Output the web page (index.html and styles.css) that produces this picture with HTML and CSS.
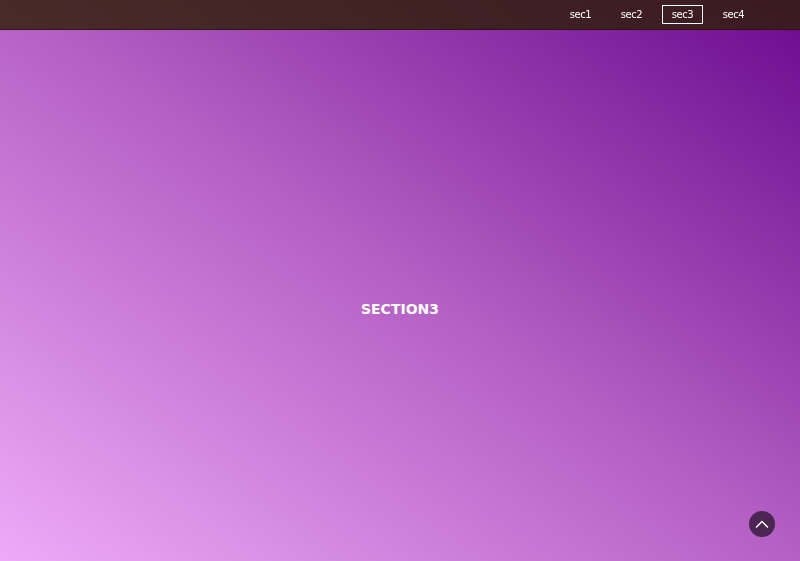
FILE: index.html
```html
<!DOCTYPE html>
<html>
<head>
<meta charset="utf-8">
<link rel="stylesheet" href="styles.css">
</head>
<body>
<header class="topbar">
  <nav class="nav">
    <a class="nav-item">sec1</a>
    <a class="nav-item">sec2</a>
    <a class="nav-item active">sec3</a>
    <a class="nav-item">sec4</a>
  </nav>
</header>
<main class="section">
  <h2 class="title">SECTION3</h2>
</main>
<button class="to-top" aria-label="top">
  <svg width="14" height="8" viewBox="0 0 14 8"><path d="M1 7.5 L7 1.5 L13 7.5" fill="none" stroke="#fff" stroke-width="1.4"/></svg>
</button>
</body>
</html>
```
FILE: styles.css
```css
html, body {
  margin: 0;
  padding: 0;
  height: 100%;
}
body {
  font-family: "DejaVu Sans", Verdana, sans-serif;
  background: linear-gradient(to top right, #eeaaf8, #b460c4 50%, #6a0a8e);
  overflow: hidden;
}
.topbar {
  position: fixed;
  top: 0;
  left: 0;
  right: 0;
  height: 29px;
  background: rgba(48, 30, 6, 0.82);
  border-bottom: 1px solid rgba(40, 10, 10, 0.6);
  display: flex;
  justify-content: flex-end;
  align-items: center;
  padding-right: 46px;
}
.nav {
  display: flex;
  gap: 10px;
}
.nav-item {
  font-size: 10px;
  letter-spacing: -0.4px;
  color: #fff;
  padding: 3px 0;
  width: 39px;
  text-align: center;
  border: 1px solid transparent;
  line-height: 11px;
}
.nav-item.active {
  border-color: #fff;
}
.section {
  height: 100%;
  display: flex;
  align-items: center;
  justify-content: center;
}
.title {
  margin: 56px 0 0 0;
  font-size: 14px;
  font-weight: bold;
  color: #fff;
}
.to-top {
  position: fixed;
  right: 25px;
  bottom: 24px;
  width: 26px;
  height: 26px;
  border-radius: 50%;
  border: none;
  padding: 0;
  background: #4b2652;
  display: flex;
  align-items: center;
  justify-content: center;
}
```
